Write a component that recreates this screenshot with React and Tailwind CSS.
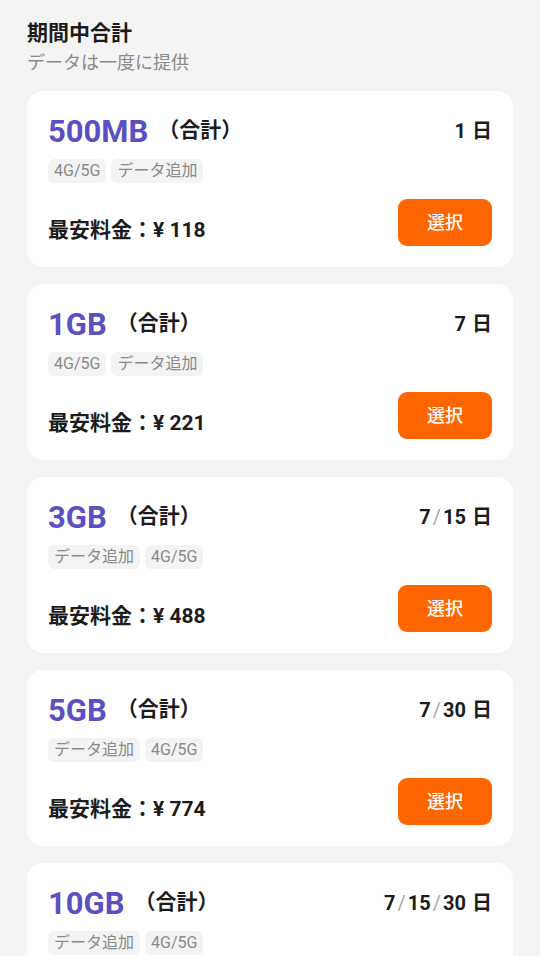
const plans = [
  { size: "500MB", days: ["1"], tags: ["4G/5G", "データ追加"], price: "118" },
  { size: "1GB", days: ["7"], tags: ["4G/5G", "データ追加"], price: "221" },
  { size: "3GB", days: ["7", "15"], tags: ["データ追加", "4G/5G"], price: "488" },
  { size: "5GB", days: ["7", "30"], tags: ["データ追加", "4G/5G"], price: "774" },
  { size: "10GB", days: ["7", "15", "30"], tags: ["データ追加", "4G/5G"], price: "1,288" },
];

function Days({ days }) {
  return (
    <div className="flex items-center text-[20px] font-bold text-[#1c1c1c]">
      {days.map((d, i) => (
        <span key={d} className="flex items-center">
          {i > 0 && <span className="mx-[2px] font-normal text-[#a8a8a8]">/</span>}
          {d}
        </span>
      ))}
      <span className="ml-[6px]">日</span>
    </div>
  );
}

function PlanCard({ plan }) {
  return (
    <div className="rounded-[16px] bg-white px-[21px] pb-[21px] pt-[23px]">
      <div className="flex h-[34px] items-center justify-between">
        <div className="flex items-center">
          <span className="text-[31px] font-bold leading-none text-[#5b50c2]">{plan.size}</span>
          <span className="ml-[10px] text-[21px] font-bold text-[#1c1c1c]">（合計）</span>
        </div>
        <Days days={plan.days} />
      </div>
      <div className="mt-[11px] flex gap-[5px]">
        {plan.tags.map((t) => (
          <span key={t} className="flex h-[24px] items-center rounded-[6px] bg-[#f3f3f3] px-[6px] text-[16px] text-[#8a8a8a]">
            {t}
          </span>
        ))}
      </div>
      <div className="mt-[16px] flex items-end justify-between">
        <span className="mb-[2px] text-[21px] font-bold leading-[28px] text-[#1c1c1c]">最安料金：¥ {plan.price}</span>
        <button className="flex h-[47px] w-[94px] items-center justify-center rounded-[9px] bg-[#ff6600] text-[18px] font-medium text-white">
          選択
        </button>
      </div>
    </div>
  );
}

export default function App() {
  return (
    <div
      className="min-h-[956px] bg-[#f4f4f4] px-[27px] pt-[19px]"
      style={{ fontFamily: 'Roboto, "Noto Sans CJK JP", sans-serif' }}
    >
      <h1 className="text-[21px] font-bold leading-[28px] text-[#1c1c1c]">期間中合計</h1>
      <p className="mt-[3px] text-[18px] leading-[26px] text-[#8a8a8a]">データは一度に提供</p>
      <div className="mt-[15px] flex flex-col gap-[17px]">
        {plans.map((p) => (
          <PlanCard key={p.size} plan={p} />
        ))}
      </div>
    </div>
  );
}
